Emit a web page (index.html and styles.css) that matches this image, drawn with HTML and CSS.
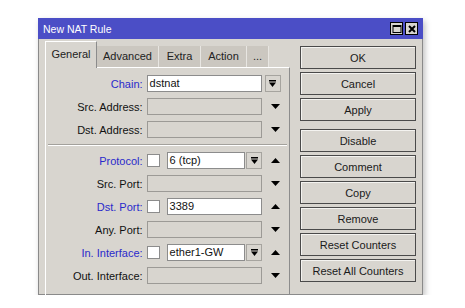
FILE: index.html
```html
<!DOCTYPE html>
<html lang="en">
<head>
    <meta charset="UTF-8">
    <title>New NAT Rule</title>
    <link rel="stylesheet" href="styles.css">
</head>
<body>
    <div class="window">
        <div class="titlebar">
            <span class="title">New NAT Rule</span>
            <span class="tb-btns">
                <span class="tb-btn">
                    <svg width="10" height="10" viewBox="0 0 10 10"><rect x="1" y="1.5" width="8" height="7" fill="none" stroke="#000" stroke-width="1"/><rect x="1" y="1" width="8" height="2" fill="#000"/></svg>
                </span>
                <span class="tb-btn">
                    <svg width="10" height="10" viewBox="0 0 10 10"><path d="M2 2 L8 8 M8 2 L2 8" stroke="#000" stroke-width="2"/></svg>
                </span>
            </span>
        </div>

        <div class="content">
            <div class="left">
                <div class="tabs">
                    <div class="tab active">General</div>
                    <div class="tab tab-adv">Advanced</div>
                    <div class="tab tab-extra">Extra</div>
                    <div class="tab tab-action">Action</div>
                    <div class="tab tab-more">...</div>
                </div>

                <div class="panel">
                    <div class="row">
                        <span class="lbl blue">Chain:</span>
                        <div class="fields"><span class="input">dstnat</span></div>
                        <div class="tail"><span class="dd"><svg width="9" height="9" viewBox="0 0 9 9"><rect x="1" y="1" width="7" height="1.5" fill="#000"/><path d="M1 3.5 H8 L4.5 8 Z" fill="#000"/></svg></span></div>
                    </div>
                    <div class="row">
                        <span class="lbl">Src. Address:</span>
                        <div class="fields"><span class="input off"></span></div>
                        <div class="tail"><svg class="arrow" width="9" height="5" viewBox="0 0 9 5"><path d="M0 0 H9 L4.5 5 Z" fill="#000"/></svg></div>
                    </div>
                    <div class="row">
                        <span class="lbl">Dst. Address:</span>
                        <div class="fields"><span class="input off"></span></div>
                        <div class="tail"><svg class="arrow" width="9" height="5" viewBox="0 0 9 5"><path d="M0 0 H9 L4.5 5 Z" fill="#000"/></svg></div>
                    </div>

                    <div class="sep"></div>

                    <div class="row">
                        <span class="lbl blue">Protocol:</span>
                        <div class="fields">
                            <span class="check"></span>
                            <span class="input">6 (tcp)</span>
                            <span class="dd"><svg width="9" height="9" viewBox="0 0 9 9"><rect x="1" y="1" width="7" height="1.5" fill="#000"/><path d="M1 3.5 H8 L4.5 8 Z" fill="#000"/></svg></span>
                        </div>
                        <div class="tail"><svg class="arrow" width="9" height="5" viewBox="0 0 9 5"><path d="M0 5 H9 L4.5 0 Z" fill="#000"/></svg></div>
                    </div>
                    <div class="row">
                        <span class="lbl">Src. Port:</span>
                        <div class="fields"><span class="input off"></span></div>
                        <div class="tail"><svg class="arrow" width="9" height="5" viewBox="0 0 9 5"><path d="M0 0 H9 L4.5 5 Z" fill="#000"/></svg></div>
                    </div>
                    <div class="row">
                        <span class="lbl blue">Dst. Port:</span>
                        <div class="fields">
                            <span class="check"></span>
                            <span class="input">3389</span>
                        </div>
                        <div class="tail"><svg class="arrow" width="9" height="5" viewBox="0 0 9 5"><path d="M0 5 H9 L4.5 0 Z" fill="#000"/></svg></div>
                    </div>
                    <div class="row">
                        <span class="lbl">Any. Port:</span>
                        <div class="fields"><span class="input off"></span></div>
                        <div class="tail"><svg class="arrow" width="9" height="5" viewBox="0 0 9 5"><path d="M0 0 H9 L4.5 5 Z" fill="#000"/></svg></div>
                    </div>
                    <div class="row">
                        <span class="lbl blue">In. Interface:</span>
                        <div class="fields">
                            <span class="check"></span>
                            <span class="input">ether1-GW</span>
                            <span class="dd"><svg width="9" height="9" viewBox="0 0 9 9"><rect x="1" y="1" width="7" height="1.5" fill="#000"/><path d="M1 3.5 H8 L4.5 8 Z" fill="#000"/></svg></span>
                        </div>
                        <div class="tail"><svg class="arrow" width="9" height="5" viewBox="0 0 9 5"><path d="M0 5 H9 L4.5 0 Z" fill="#000"/></svg></div>
                    </div>
                    <div class="row">
                        <span class="lbl">Out. Interface:</span>
                        <div class="fields"><span class="input off"></span></div>
                        <div class="tail"><svg class="arrow" width="9" height="5" viewBox="0 0 9 5"><path d="M0 0 H9 L4.5 5 Z" fill="#000"/></svg></div>
                    </div>
                </div>
            </div>

            <div class="right">
                <button class="btn">OK</button>
                <button class="btn">Cancel</button>
                <button class="btn">Apply</button>
                <button class="btn spaced">Disable</button>
                <button class="btn">Comment</button>
                <button class="btn">Copy</button>
                <button class="btn">Remove</button>
                <button class="btn">Reset Counters</button>
                <button class="btn">Reset All Counters</button>
            </div>
        </div>
    </div>
</body>
</html>
```

FILE: styles.css
```css
body {
    margin: 0;
    padding: 18px 0 0 38px;
    background: #fff;
    font-family: "Liberation Sans", Arial, sans-serif;
    font-size: 11px;
    color: #111;
}

.window {
    width: 383px;
    height: 275px;
    border: 1px solid #8a8a8a;
    background: #d8d5cf;
    box-shadow: 2px 3px 6px rgba(0, 0, 0, 0.25);
}

.titlebar {
    height: 21px;
    background: #4b4ec6;
    display: flex;
    align-items: center;
    justify-content: space-between;
    padding: 0 5px 0 5px;
    margin: -1px -1px 0 -1px;
}

.title {
    color: #fff;
    font-size: 10.5px;
}

.tb-btns {
    display: flex;
    gap: 2px;
}

.tb-btn {
    width: 11px;
    height: 11px;
    border: 1px solid #000;
    background: #d8d5cf;
    display: flex;
    align-items: center;
    justify-content: center;
}

.content {
    display: flex;
    gap: 10px;
    padding: 3px 6px 0 6px;
}

.left {
    width: 245px;
}

.tabs {
    display: flex;
    align-items: flex-end;
    height: 25px;
}

.tab {
    height: 21px;
    line-height: 21px;
    text-align: center;
    background: #cbc7c0;
    border-right: 1px solid #e8e6e2;
    color: #222;
}

.tab.active {
    width: 50px;
    height: 26px;
    line-height: 24px;
    background: #d8d5cf;
    border-top: 1px solid #fff;
    border-left: 1px solid #fff;
    border-right: 1px solid #8c8c8c;
    margin-bottom: -1px;
    position: relative;
}

.tab-adv { width: 61px; }
.tab-extra { width: 41px; }
.tab-action { width: 45px; }
.tab-more { width: 21px; }

.panel {
    height: 222px;
    border-top: 1px solid #fff;
    border-left: 1px solid #fff;
    border-right: 1px solid #8c8c8c;
    border-bottom: 1px solid #8c8c8c;
    padding: 7px 0 0 0;
    display: flex;
    flex-direction: column;
    gap: 6px;
}

.row {
    display: flex;
    align-items: center;
    height: 17px;
}

.lbl {
    width: 97px;
    margin-right: 4px;
    text-align: right;
    white-space: nowrap;
}

.lbl.blue {
    color: #2a2acb;
}

.fields {
    width: 116px;
    display: flex;
    align-items: center;
    height: 17px;
}

.input {
    flex: 1;
    height: 15px;
    line-height: 15px;
    border: 1px solid #8c8c8c;
    background: #fff;
    padding-left: 2px;
    white-space: nowrap;
    overflow: hidden;
}

.input.off {
    background: #d8d5cf;
    border-color: #9c9a96;
}

.check {
    width: 11px;
    height: 11px;
    border: 1px solid #8c8c8c;
    background: #fff;
    margin-right: 7px;
}

.dd {
    width: 14px;
    height: 15px;
    margin-left: 1px;
    border: 1px solid #a6a49f;
    background: #d8d5cf;
    display: flex;
    align-items: center;
    justify-content: center;
}

.tail {
    width: 27px;
    display: flex;
    align-items: center;
    justify-content: center;
    height: 17px;
}

.tail .dd {
    margin-left: -6px;
}

.sep {
    height: 0;
    margin: 0 2px;
    border-top: 1px solid #a3a19c;
    border-bottom: 1px solid #fff;
}

.right {
    width: 116px;
    display: flex;
    flex-direction: column;
    gap: 3px;
    padding-top: 4px;
}

.btn {
    height: 23px;
    width: 116px;
    border: 1px solid #4a4a4a;
    box-shadow: inset 1px 1px #f4f3f0;
    background: #d8d5cf;
    font-family: "Liberation Sans", Arial, sans-serif;
    font-size: 11px;
    color: #1a1a1a;
    padding: 0;
}

.btn.spaced {
    margin-top: 5px;
}
```
